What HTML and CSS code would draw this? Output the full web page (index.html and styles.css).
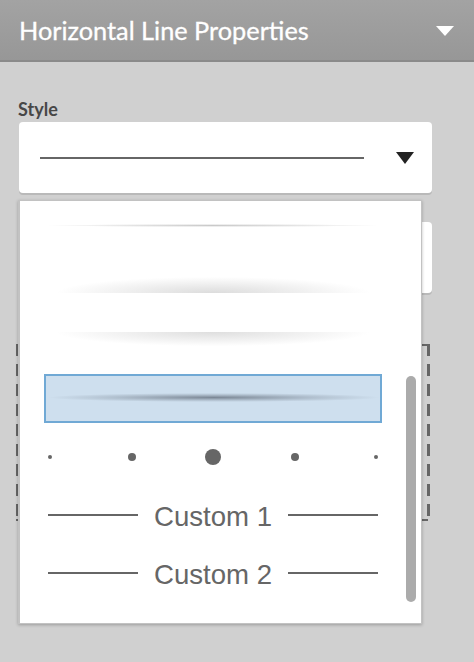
FILE: index.html
```html
<!DOCTYPE html>
<html>
<head>
<meta charset="utf-8">
<link rel="stylesheet" href="styles.css">
</head>
<body>
<div class="header">
  <span class="title">Horizontal Line Properties</span>
  <span class="caret-white"></span>
</div>
<div class="panel">
  <div class="label">Style</div>
  <div class="select">
    <span class="select-line"></span>
    <span class="caret-black"></span>
  </div>
  <div class="input2"></div>
  <div class="dashed"></div>

  <div class="dropdown">
    <div class="list">
      <div class="row r1"><span class="g1"></span></div>
      <div class="row r2"><span class="g2"></span></div>
      <div class="row r3"><span class="g3"></span></div>
      <div class="row r4"><div class="sel"><span class="g4"></span></div></div>
      <div class="row r5">
        <span class="cell"><i class="dot d1"></i></span>
        <span class="cell"><i class="dot d2"></i></span>
        <span class="cell"><i class="dot d3"></i></span>
        <span class="cell"><i class="dot d2"></i></span>
        <span class="cell"><i class="dot d1"></i></span>
      </div>
      <div class="row r6 custom"><span class="cl"></span><span class="ct">Custom 1</span><span class="cl"></span></div>
      <div class="row r7 custom"><span class="cl"></span><span class="ct">Custom 2</span><span class="cl"></span></div>
    </div>
    <div class="scrollbar"></div>
  </div>
</div>
</body>
</html>
```
FILE: styles.css
```css
html, body { margin: 0; padding: 0; }
body {
  width: 474px;
  height: 662px;
  background: #d0d0d0;
  font-family: Lato, "Open Sans", sans-serif;
  position: relative;
  overflow: hidden;
}
.header {
  height: 60px;
  background: linear-gradient(#a3a3a3, #979797);
  border-bottom: 2px solid #8a8a8a;
  display: flex;
  align-items: center;
  padding: 0 20px 0 19px;
  box-sizing: content-box;
}
.title {
  color: #fff;
  font-size: 25.3px;
  flex: 1;
  margin-top: -1px;
  -webkit-text-stroke: 0.3px #fff;
}
.caret-white {
  width: 0; height: 0;
  border-left: 9px solid transparent;
  border-right: 9px solid transparent;
  border-top: 10px solid #fff;
  margin-top: 1px;
}
.panel {
  padding: 36px 0 0 0;
}
.label {
  margin-left: 18px;
  font-weight: 700;
  font-size: 18px;
  color: #474747;
  line-height: 22px;
  height: 24px;
}
.select {
  margin-left: 19px;
  width: 413px;
  height: 71px;
  box-sizing: border-box;
  background: #fff;
  border-radius: 4px;
  box-shadow: 0 2px 0 #b9b9b9;
  display: flex;
  align-items: center;
  padding: 0 18px 0 21px;
}
.select-line {
  width: 324px;
  height: 2px;
  background: #666;
  margin-top: 1px;
}
.caret-black {
  margin-left: auto;
  width: 0; height: 0;
  border-left: 9px solid transparent;
  border-right: 9px solid transparent;
  border-top: 12px solid #222;
  margin-top: 1px;
}
.input2 {
  margin: 29px 0 0 19px;
  width: 413px;
  height: 71px;
  background: #fff;
  border-radius: 4px;
  box-shadow: 0 2px 0 #b9b9b9;
}
.dashed {
  margin: 51px 0 0 16px;
  width: 414px;
  height: 177px;
  background:
    repeating-linear-gradient(to bottom, #666 0 12px, transparent 12px 20px) left top / 2px 100% no-repeat,
    repeating-linear-gradient(to bottom, #666 0 12px, transparent 12px 20px) right top / 3px 100% no-repeat,
    repeating-linear-gradient(to right, #666 0 12px, transparent 12px 20px) left top / 100% 2px no-repeat,
    repeating-linear-gradient(to right, #666 0 12px, transparent 12px 20px) left bottom / 100% 2px no-repeat;
}
.dropdown {
  position: absolute;
  left: 18px;
  top: 200px;
  width: 404px;
  height: 424px;
  box-sizing: border-box;
  background: #fff;
  border: 1px solid #c2c2c2;
  border-left-width: 2px;
  box-shadow: 0 1px 3px rgba(0,0,0,0.25);
}
.list {
  display: flex;
  flex-direction: column;
}
.row {
  display: flex;
  align-items: center;
  padding-left: 28px;
}
.r1 { height: 48px; }
.r2 { height: 72px; }
.r3 { height: 36px; }
.r4 { height: 83px; padding-left: 24px; }
.r5 { height: 34px; }
.r6 { height: 82px; }
.r7 { height: 34px; }

.g1 {
  width: 330px; height: 3px;
  background: radial-gradient(ellipse closest-side, #c9c9c9, rgba(255,255,255,0));
}
.g2 {
  width: 330px; height: 17px;
  margin-top: -1px;
  background: radial-gradient(ellipse 50% 100% at 50% 100%, #dcdcdc, rgba(255,255,255,0) 95%);
}
.g3 {
  width: 330px; height: 15px;
  margin-top: 0px;
  background: radial-gradient(ellipse 50% 100% at 50% 0%, #dedede, rgba(255,255,255,0) 95%);
}
.sel {
  width: 338px; height: 49px;
  box-sizing: border-box;
  border: 2px solid #70a9d5;
  background: #cedfee;
  display: flex;
  align-items: center;
  padding-left: 2px;
}
.g4 {
  width: 332px; height: 9px;
  margin-top: -3px;
  background: radial-gradient(ellipse closest-side, #7c8896, rgba(124,136,150,0.35) 60%, rgba(206,223,238,0));
}
.r5 .cell {
  width: 4px;
  display: flex;
  justify-content: center;
  align-items: center;
  margin-right: 77.5px;
}
.r5 .cell:last-child { margin-right: 0; }
.dot { display: block; border-radius: 50%; background: #666; flex: none; }
.d1 { width: 4px; height: 4px; }
.d2 { width: 8px; height: 8px; }
.d3 { width: 16px; height: 16px; }

.cl { width: 90px; height: 2px; background: #666; flex: none; }
.ct {
  width: 150px;
  text-align: center;
  font-family: "Liberation Sans", Arial, sans-serif;
  font-size: 27.6px;
  color: #666;
  line-height: 30px;
  margin-top: 3px;
}
.scrollbar {
  position: absolute;
  right: 5px;
  top: 175px;
  width: 10px;
  height: 226px;
  border-radius: 5px;
  background: #ababab;
}
```
